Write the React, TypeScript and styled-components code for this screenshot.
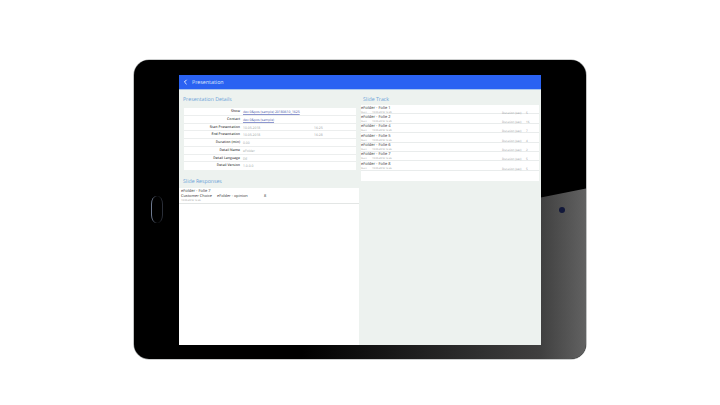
import React, { FC } from "react";
import styled, { createGlobalStyle } from "styled-components";

const details = [
  { label: "Show", value: "dev 0&pos (sample) 20180610_1625", link: true },
  { label: "Contact", value: "dev 0&pos (sample)", link: true },
  { label: "Start Presentation", value: "10.05.2018", time: "16:25" },
  { label: "End Presentation", value: "10.05.2018", time: "16:28" },
  { label: "Duration (min)", value: "0.00" },
  { label: "Detail Name", value: "eFolder" },
  { label: "Detail Language", value: "DE" },
  { label: "Detail Version", value: "1.0.0.0" },
];

const slides = [
  { name: "eFolder - Folie 1", start: "10.05.2018 16:25", duration: "5" },
  { name: "eFolder - Folie 2", start: "10.05.2018 16:25", duration: "16" },
  { name: "eFolder - Folie 4", start: "10.05.2018 16:25", duration: "7" },
  { name: "eFolder - Folie 5", start: "10.05.2018 16:26", duration: "4" },
  { name: "eFolder - Folie 6", start: "10.05.2018 16:26", duration: "2" },
  { name: "eFolder - Folie 7", start: "10.05.2018 16:26", duration: "5" },
  { name: "eFolder - Folie 8", start: "10.05.2018 16:26", duration: "5" },
];

const App: FC = () => (
  <>
    <GlobalStyle />
    <Page>
      <Tablet>
        <Gloss />
        <HomeButton />
        <Camera />
        <Screen>
          <Header>
            <svg width="5" height="6" viewBox="0 0 5 6" fill="none">
              <path d="M3.6 0.8 1.4 3l2.2 2.2" stroke="#fff" strokeWidth="0.9" />
            </svg>
            <HeaderTitle>Presentation</HeaderTitle>
          </Header>
          <Columns>
            <LeftColumn>
              <DetailsSection>
                <SectionTitle>Presentation Details</SectionTitle>
                <DetailsPanel>
                  {details.map((row) => (
                    <DetailRow key={row.label}>
                      <DetailLabel>{row.label}</DetailLabel>
                      <DetailValue link={!!row.link}>{row.value}</DetailValue>
                      <DetailValue>{row.time}</DetailValue>
                    </DetailRow>
                  ))}
                </DetailsPanel>
                <SectionTitle tight>Slide Responses</SectionTitle>
              </DetailsSection>
              <ResponseRow>
                <ResponseName>eFolder - Folie 7</ResponseName>
                <ResponseLine>
                  <span>Customer Choice</span>
                  <span>eFolder - opinion</span>
                  <span>8</span>
                </ResponseLine>
                <ResponseDate>10.05.2018 16:26</ResponseDate>
              </ResponseRow>
            </LeftColumn>
            <RightColumn>
              <SectionTitle>Slide Track</SectionTitle>
              <TrackPanel>
                {slides.map((slide) => (
                  <TrackRow key={slide.name}>
                    <div>
                      <TrackName>{slide.name}</TrackName>
                      <TrackMeta>
                        <span>Start</span>
                        <span>{slide.start}</span>
                      </TrackMeta>
                    </div>
                    <TrackDuration>Duration (sec)</TrackDuration>
                    <TrackDuration>{slide.duration}</TrackDuration>
                  </TrackRow>
                ))}
              </TrackPanel>
            </RightColumn>
          </Columns>
        </Screen>
      </Tablet>
    </Page>
  </>
);

const GlobalStyle = createGlobalStyle`
  html, body {
    margin: 0;
    background: #fff;
    font-family: "Open Sans", "Liberation Sans", sans-serif;
    text-rendering: geometricPrecision;
  }
`;
const Page = styled.div`
  width: 720px;
  height: 405px;
  display: flex;
  align-items: flex-start;
  justify-content: center;
  padding-top: 60px;
  box-sizing: border-box;
  overflow: hidden;
`;
const Tablet = styled.div`
  position: relative;
  width: 452px;
  height: 299px;
  padding: 15px 45px 14px;
  box-sizing: border-box;
  background: #000;
  border-radius: 15px;
  box-shadow: 0 0 0 0.6px #9a9d9d;
  overflow: hidden;
`;
const Gloss = styled.div`
  position: absolute;
  inset: 0;
  background: linear-gradient(90deg, #000 37%, #404040 90%, #626262 100%);
  clip-path: polygon(100% 43%, 100% 100%, 37% 100%, 37% 90%, 90% 46%);
`;
const HomeButton = styled.div`
  position: absolute;
  left: 17px;
  top: 136px;
  width: 12px;
  height: 27px;
  box-sizing: border-box;
  border-radius: 6px / 8px;
  border-left: 1.4px solid #6e7a90;
  border-right: 0.6px solid #2a2e38;
`;
const Camera = styled.div`
  position: absolute;
  right: 21px;
  top: 147px;
  width: 6px;
  height: 6px;
  border-radius: 50%;
  background: #12183a;
`;
const Screen = styled.div`
  position: relative;
  height: 100%;
  display: flex;
  flex-direction: column;
  background: #fff;
`;
const Header = styled.div`
  flex: none;
  height: 15px;
  padding-left: 4px;
  display: flex;
  align-items: center;
  gap: 4px;
  box-sizing: border-box;
  background: #2a62f2;
  border-bottom: 1px solid #a9c6ef;
`;
const HeaderTitle = styled.span`
  font-size: 5.3px;
  color: #dfe9fb;
`;
const Columns = styled.div`
  flex: 1;
  display: grid;
  grid-template-columns: 180px 182px;
`;
const LeftColumn = styled.div`
  display: flex;
  flex-direction: column;
  background: #fff;
`;
const DetailsSection = styled.div`
  background: #edf2ef;
`;
const SectionTitle = styled.div<{ tight?: boolean }>`
  height: ${(props) => (props.tight ? "14px" : "18px")};
  padding: ${(props) => (props.tight ? "3px" : "5px")} 0 0 4px;
  box-sizing: border-box;
  font-size: 5.2px;
  line-height: 8px;
  color: #6a9fd8;
`;
const DetailsPanel = styled.div`
  margin: 0 3px 4px 5px;
  background: #fff;
`;
const DetailRow = styled.div`
  height: 7.75px;
  padding-top: 2px;
  display: grid;
  grid-template-columns: 56px 68px 1fr;
  gap: 3px;
  align-items: start;
  border-bottom: 0.4px solid #eceeee;
  box-sizing: border-box;
  &:last-child {
    border-bottom: 0;
  }
`;
const DetailLabel = styled.div`
  font-size: 3.45px;
  line-height: 4.4px;
  font-weight: 600;
  text-align: right;
  color: #444;
  white-space: nowrap;
`;
const DetailValue = styled.div<{ link?: boolean }>`
  font-size: 3.4px;
  line-height: 4.4px;
  white-space: nowrap;
  color: ${(props) => (props.link ? "#4a58a8" : "#a2a7a8")};
  text-decoration: ${(props) => (props.link ? "underline" : "none")};
  text-decoration-color: #8d96cf;
  text-decoration-thickness: 0.3px;
`;
const ResponseRow = styled.div`
  height: 16px;
  padding-left: 2px;
  box-sizing: border-box;
  border-bottom: 0.5px solid #e3e6e5;
`;
const ResponseName = styled.div`
  font-size: 4px;
  line-height: 5.4px;
  padding-top: 0.6px;
  color: #333;
`;
const ResponseLine = styled.div`
  display: grid;
  grid-template-columns: 36px 47px 1fr;
  font-size: 3.9px;
  line-height: 5.4px;
  color: #333;
`;
const ResponseDate = styled.div`
  font-size: 2.5px;
  line-height: 3.2px;
  color: #999;
`;
const RightColumn = styled.div`
  background: #edf2ef;
`;
const TrackPanel = styled.div`
  margin: -3px 2px 0 2px;
  height: 76px;
  background: #fff;
`;
const TrackRow = styled.div`
  height: 9.4px;
  padding-top: 0.5px;
  display: grid;
  grid-template-columns: 141px 24px 1fr;
  align-items: start;
  box-sizing: border-box;
  border-bottom: 0.4px solid #e9ecec;
`;
const TrackName = styled.div`
  font-size: 4px;
  line-height: 5px;
  color: #333;
`;
const TrackMeta = styled.div`
  display: grid;
  grid-template-columns: 11px 1fr;
  font-size: 2.5px;
  line-height: 3.6px;
  color: #999;
`;
const TrackDuration = styled.div`
  margin-top: 5px;
  font-size: 3px;
  line-height: 4px;
  color: #999ea0;
`;

export default App;
